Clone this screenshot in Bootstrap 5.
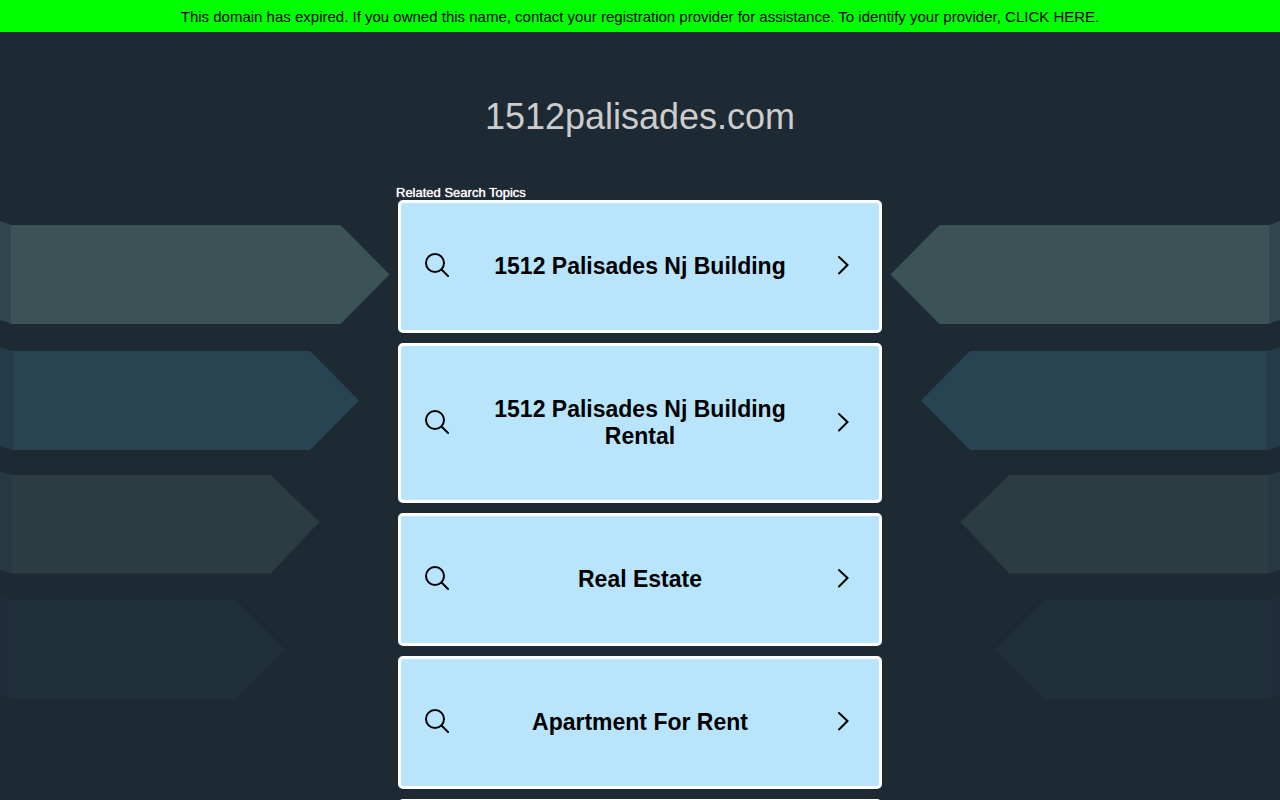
<!DOCTYPE html>
<html lang="en">
<head>
<meta charset="utf-8">
<meta name="viewport" content="width=device-width, initial-scale=1">
<title>1512palisades.com</title>
<link href="https://cdn.jsdelivr.net/npm/bootstrap@5.3.0/dist/css/bootstrap.min.css" rel="stylesheet">
<style>
  body { background: #1e2a33; font-family: "Liberation Sans", Arial, sans-serif; }
  .notice { background: #0f0; color: #000; font-size: 15px; line-height: 20px; padding: 7px 8px 5px; }
  .site-title { color: #ccc; font-size: 36px; line-height: 42px; padding: 64px 0 48px; }
  .topics { width: 500px; max-width: 100%; }
  .topics-label { color: #fff; font-size: 13px; line-height: 14px; padding-left: 6px; text-shadow: 0 0 1px #fff; }
  .topic-list { gap: 10px; padding: 0 8px; }
  .topic { background: #b8e5fc; border: 3px solid #fff; border-radius: 5px; color: #000; padding: 50px 24px; }
  .topic-text { font-size: 23px; line-height: 27px; }
  .topic svg { width: 24px; height: 24px; fill: none; stroke: #000; stroke-width: 2; stroke-linecap: round; margin-bottom: 3px; }
  .arrows { height: 500px; margin-top: 20px; }
  .flip { transform: scaleX(-1); }
</style>
</head>
<body>
<header>
  <div class="notice text-center">This domain has expired. If you owned this name, contact your registration provider for assistance. To identify your provider, <a href="#" class="text-reset text-decoration-none">CLICK HERE</a>.</div>
  <h1 class="site-title text-center fw-normal m-0">1512palisades.com</h1>
</header>

<div class="d-flex justify-content-center overflow-hidden">
  <div class="flex-fill d-none d-lg-block" aria-hidden="true">
    <svg class="arrows d-block w-100" viewBox="0 0 390 500" preserveAspectRatio="xMaxYMin slice">
      <defs>
        <g id="arrows">
          <path fill="#31464d" d="M-30 5 0 15 11 19v98.500L0 114l-30-10z"/>
          <path fill="#3b5357" d="M11 19H340.500l49 49.500-49 49.500H11z"/>
          <path fill="#253c4a" d="M-30 131 0 141l12.500 4v99L0 240l-30-10z"/>
          <path fill="#284453" d="M12.500 145H310l49 49.500-49 49.500H12.500z"/>
          <path fill="#273840" d="M-30 255 0 265l12 4v98.500L0 364l-30-10z"/>
          <path fill="#2b3d42" d="M12 269h258.500l49 47-49 51.500H12z"/>
          <path fill="#1f2e3a" d="M-30 380 0 390l12 4v98.500L0 489l-30-10z"/>
          <path fill="#20303b" d="M12 394.500h224l49 49-49 49H12z"/>
          <path fill="none" stroke="#364d53" stroke-opacity=".5" d="M340.500 20v97"/>
          <path fill="none" stroke="#263f4d" stroke-opacity=".6" d="M309.500 146v97"/>
          <path fill="none" stroke="#1f2d37" stroke-opacity=".6" d="M235.500 396v96"/>
        </g>
      </defs>
      <use href="#arrows"/>
    </svg>
  </div>

  <main class="topics flex-shrink-0">
    <div class="topics-label">Related Search Topics</div>
    <nav class="topic-list d-flex flex-column" aria-label="Related Search Topics">
      <a href="#" class="topic d-flex align-items-center text-decoration-none">
        <svg class="flex-shrink-0" viewBox="0 0 24 24" aria-hidden="true"><circle cx="10" cy="10" r="9"/><path d="M16.500 16.500 23 23"/></svg>
        <span class="topic-text flex-fill fw-bold text-center px-4">1512 Palisades Nj Building</span>
        <svg class="flex-shrink-0" viewBox="0 0 24 24" aria-hidden="true"><path d="m8 4 8.500 8L8 20.500"/></svg>
      </a>
      <a href="#" class="topic d-flex align-items-center text-decoration-none">
        <svg class="flex-shrink-0" viewBox="0 0 24 24" aria-hidden="true"><circle cx="10" cy="10" r="9"/><path d="M16.500 16.500 23 23"/></svg>
        <span class="topic-text flex-fill fw-bold text-center px-4">1512 Palisades Nj Building Rental</span>
        <svg class="flex-shrink-0" viewBox="0 0 24 24" aria-hidden="true"><path d="m8 4 8.500 8L8 20.500"/></svg>
      </a>
      <a href="#" class="topic d-flex align-items-center text-decoration-none">
        <svg class="flex-shrink-0" viewBox="0 0 24 24" aria-hidden="true"><circle cx="10" cy="10" r="9"/><path d="M16.500 16.500 23 23"/></svg>
        <span class="topic-text flex-fill fw-bold text-center px-4">Real Estate</span>
        <svg class="flex-shrink-0" viewBox="0 0 24 24" aria-hidden="true"><path d="m8 4 8.500 8L8 20.500"/></svg>
      </a>
      <a href="#" class="topic d-flex align-items-center text-decoration-none">
        <svg class="flex-shrink-0" viewBox="0 0 24 24" aria-hidden="true"><circle cx="10" cy="10" r="9"/><path d="M16.500 16.500 23 23"/></svg>
        <span class="topic-text flex-fill fw-bold text-center px-4">Apartment For Rent</span>
        <svg class="flex-shrink-0" viewBox="0 0 24 24" aria-hidden="true"><path d="m8 4 8.500 8L8 20.500"/></svg>
      </a>
      <a href="#" class="topic d-flex align-items-center text-decoration-none">
        <svg class="flex-shrink-0" viewBox="0 0 24 24" aria-hidden="true"><circle cx="10" cy="10" r="9"/><path d="M16.500 16.500 23 23"/></svg>
        <span class="topic-text flex-fill fw-bold text-center px-4">Homes For Rent</span>
        <svg class="flex-shrink-0" viewBox="0 0 24 24" aria-hidden="true"><path d="m8 4 8.500 8L8 20.500"/></svg>
      </a>
    </nav>
  </main>

  <div class="flex-fill d-none d-lg-block" aria-hidden="true">
    <svg class="arrows flip d-block w-100" viewBox="0 0 390 500" preserveAspectRatio="xMaxYMin slice"><use href="#arrows"/></svg>
  </div>
</div>
<script src="https://cdn.jsdelivr.net/npm/bootstrap@5.3.0/dist/js/bootstrap.bundle.min.js"></script>
</body>
</html>
